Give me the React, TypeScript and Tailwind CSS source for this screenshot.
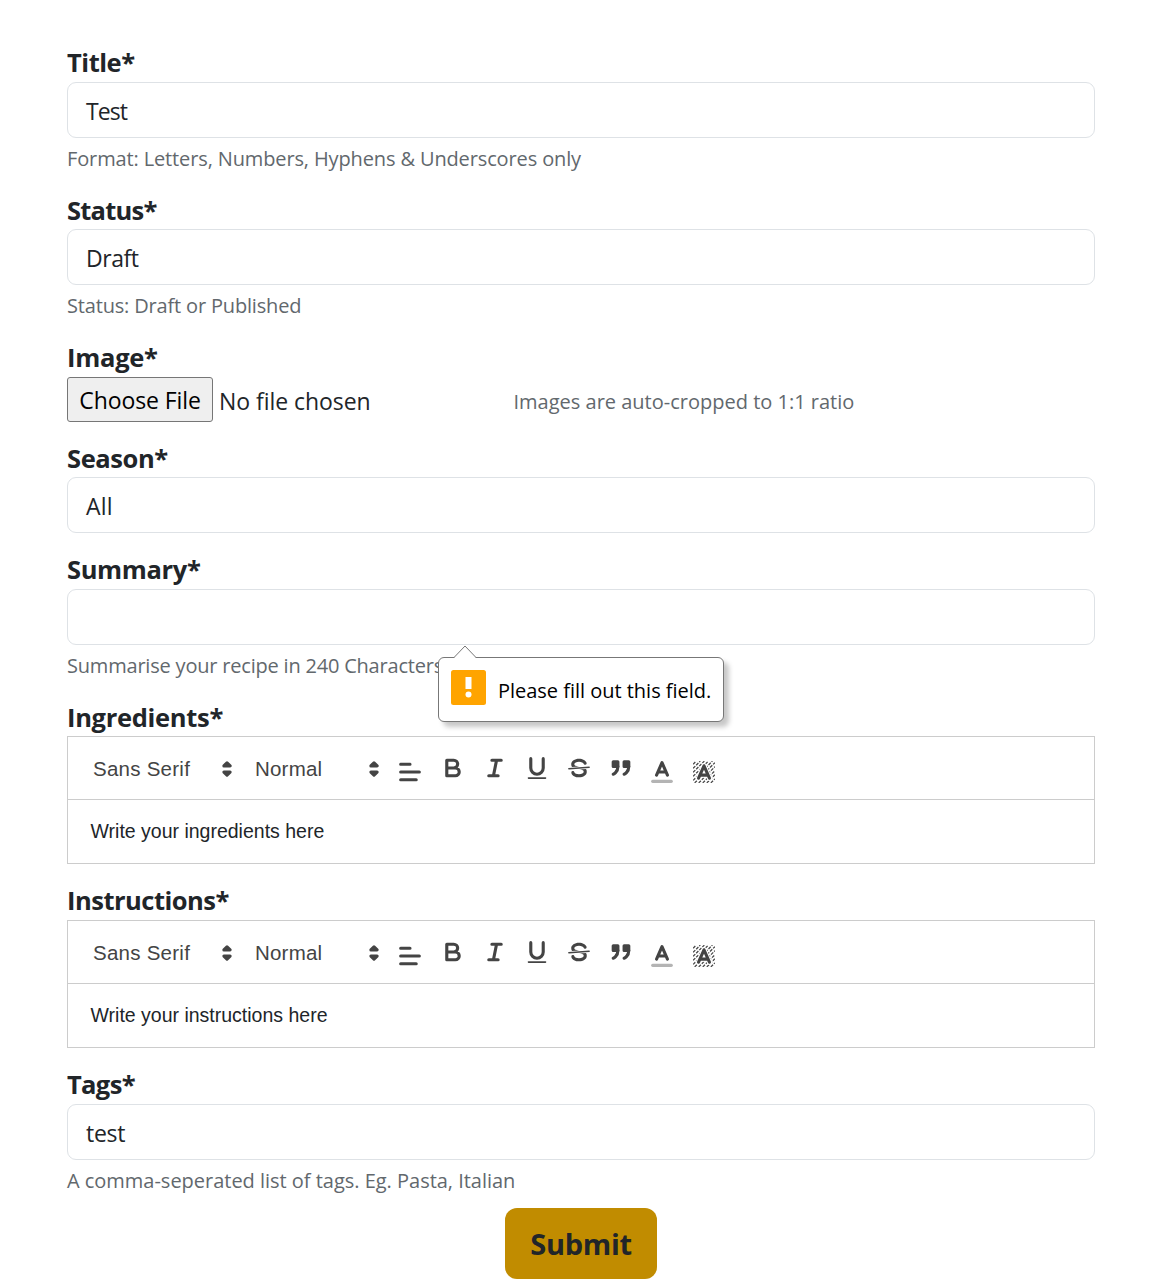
import type { ReactNode } from 'react';

const stroke = { fill: 'none', stroke: '#444', strokeWidth: 2, strokeLinecap: 'round', strokeLinejoin: 'round' } as const;

function Label({ children, track }: { children: ReactNode; track: string }) {
  return <label className={`block h-[39px] whitespace-nowrap text-[25.5px] leading-[39px] font-bold ${track}`}>{children}</label>;
}

function Box({ children, track = '' }: { children?: ReactNode; track?: string }) {
  return (
    <div className={`flex h-14 items-center rounded-[9px] border border-[#dee2e6] bg-white px-[18px] pt-px text-[23px] leading-[34px] ${track}`}>
      {children}
    </div>
  );
}

function Help({ children, track }: { children: ReactNode; track: string }) {
  return <p className={`w-max whitespace-nowrap text-[20px] leading-[30px] text-[#62686d] ${track}`}>{children}</p>;
}

function Icon({ children, low = false }: { children: ReactNode; low?: boolean }) {
  return (
    <svg viewBox="0 0 18 18" className={low ? 'size-7 shrink-0 mt-[21px]' : 'ml-[0.5px] mr-[-0.5px] mt-[17px] size-7 shrink-0'}>
      {children}
    </svg>
  );
}

function Picker({ text, className, track }: { text: string; className: string; track: string }) {
  return (
    <div className={`flex h-16 shrink-0 items-center justify-between ${className}`}>
      <span className={`text-[20.5px] leading-[30px] text-[#444] ${track}`}>{text}</span>
      <svg viewBox="0 0 18 18" className="size-7 shrink-0" {...stroke} fill="#444">
        <polygon points="7 11 9 13 11 11" />
        <polygon points="7 7 9 5 11 7" />
      </svg>
    </div>
  );
}

function Hatch() {
  return (
    <g stroke="#444" strokeWidth="0.8" fill="none">
      <svg x="2" y="2" width="14" height="14" viewBox="2 2 14 14">
        <path d="M2 4L4 2M2 6.6L6.6 2M2 9.2L9.2 2M2 11.8L11.8 2M2 14.4L14.4 2M3 16L16 3M5.6 16L16 5.6M8.2 16L16 8.2M10.8 16L16 10.8M13.4 16L16 13.4" strokeDasharray="2 0.8" />
      </svg>
      <path d="M5.5 13L9 5L12.5 13M6.4 11H11.6" stroke="white" strokeWidth="3.4" strokeLinejoin="round" strokeLinecap="round" />
    </g>
  );
}

function Editor({ text, track }: { text: string; track: string }) {
  return (
    <div className="h-32 border border-[#ccc] font-['Liberation_Sans',Arial,sans-serif]">
      <div className="flex h-[63px] items-start border-b border-[#ccc] pl-[25px]">
        <Picker text="Sans Serif" className="w-[148px]" track="tracking-[0.25px]" />
        <Picker text="Normal" className="ml-[14px] w-[133px]" track="tracking-[0.2px]" />
        <div className="ml-[8px] flex gap-[14px]">
          <Icon low>
            <path {...stroke} d="M3 9H15M3 14H13M3 4H9" />
          </Icon>
          <Icon>
            <path {...stroke} d="M5,4H9.5A2.5,2.5,0,0,1,12,6.5v0A2.5,2.5,0,0,1,9.5,9H5ZM5,9h5.5A2.5,2.5,0,0,1,13,11.5v0A2.5,2.5,0,0,1,10.5,14H5Z" />
          </Icon>
          <Icon>
            <path {...stroke} d="M7 4H13M5 14H11M8 14L10 4" />
          </Icon>
          <Icon>
            <path {...stroke} d="M5,3V9a4.012,4.012,0,0,0,4,4H9a4.012,4.012,0,0,0,4-4V3" />
            <rect fill="#444" height="1" width="12" rx="0.5" x="3" y="15" />
          </Icon>
          <Icon>
            <line x1="15.5" x2="2.5" y1="8.5" y2="9.5" {...stroke} strokeWidth="1" />
            <path fill="#444" d="M9.007,8C6.542,7.791,6,7.519,6,6.5,6,5.792,7.283,5,9,5c1.571,0,2.765.679,2.969,1.309a1,1,0,0,0,1.9-.617C13.356,4.106,11.354,3,9,3,6.2,3,4,4.538,4,6.5a3.2,3.2,0,0,0,.5,1.843Z" />
            <path fill="#444" d="M8.984,10C11.457,10.208,12,10.479,12,11.5c0,0.708-1.283,1.5-3,1.5-1.571,0-2.765-.679-2.969-1.309a1,1,0,1,0-1.9.617C4.644,13.894,6.646,15,9,15c2.8,0,5-1.538,5-3.5a3.2,3.2,0,0,0-.5-1.843Z" />
          </Icon>
          <Icon>
            <g {...stroke} fill="#444">
              <rect height="3" width="3" x="4" y="5" />
              <rect height="3" width="3" x="11" y="5" />
              <path d="M7,8c0,4.031-3,5-3,5" />
              <path d="M14,8c0,4.031-3,5-3,5" />
            </g>
          </Icon>
          <Icon low>
            <line x1="3" x2="15" y1="15" y2="15" {...stroke} opacity="0.4" />
            <path {...stroke} d="M5.5 11L9 3L12.5 11M11.63 9H6.38" />
          </Icon>
          <Icon low>
            <Hatch />
            <path {...stroke} d="M5.5 13L9 5L12.5 13M11.63 11H6.38" />
          </Icon>
        </div>
      </div>
      <p className={`pt-4 pl-[22.5px] text-[19.5px] leading-[30px] ${track}`}>{text}</p>
    </div>
  );
}

function Tooltip() {
  return (
    <div className="absolute top-[68px] left-[371px] z-10 flex h-[65px] w-[286px] items-center rounded-[6px] border border-[#777] bg-white pl-3 text-black shadow-[5px_5px_5px_rgba(0,0,0,0.22)]">
      <svg viewBox="0 0 26 14" className="absolute -top-[13px] left-[13px] h-[14px] w-[26px]">
        <path d="M1 14L13 1.5L25 14" fill="white" />
        <path d="M0.5 12.5H2L13 1L24 12.5H25.5" fill="none" stroke="#777" />
      </svg>
      <svg viewBox="0 0 35 35" className="-mt-[4px] size-[35px] shrink-0">
        <rect width="35" height="35" rx="2.5" fill="#ffa400" />
        <rect x="14.5" y="7" width="6" height="12" fill="white" />
        <circle cx="17.5" cy="24.5" r="3" fill="white" />
      </svg>
      <span className="mt-[2px] ml-3 whitespace-nowrap text-[20px] tracking-[-0.02px]">Please fill out this field.</span>
    </div>
  );
}

export default function App() {
  return (
    <form className="flex h-[1288px] w-[1158px] flex-col overflow-hidden bg-white pt-[43px] pr-[63px] pl-[67px] font-['Open_Sans','Noto_Sans',sans-serif] text-[#212529]">
      <section className="h-[147px] shrink-0">
        <Label track="tracking-[-0.45px]">Title*</Label>
        <Box track="tracking-[-0.9px]">Test</Box>
        <div className="pt-[6px]"><Help track="tracking-[-0.13px]">Format: Letters, Numbers, Hyphens &amp; Underscores only</Help></div>
      </section>
      <section className="h-[148px] shrink-0">
        <Label track="pt-px tracking-[-0.75px]">Status*</Label>
        <Box track="tracking-[-0.45px]">Draft</Box>
        <div className="pt-[6px]"><Help track="tracking-[-0.17px]">Status: Draft or Published</Help></div>
      </section>
      <section className="h-[100px] shrink-0">
        <Label track="tracking-[-0.25px]">Image*</Label>
        <div className="flex h-[45px] items-center">
          <button type="button" className="h-[45px] w-[146px] rounded-[3px] border border-[#767676] bg-[#efefef] text-[23px] leading-[34px] tracking-[-0.1px] whitespace-nowrap text-black">Choose File</button>
          <span className="w-[294px] pt-[3px] pl-[6px] text-[23px] leading-[34px] tracking-[-0.05px]">No file chosen</span>
          <div className="pl-[6.5px] pt-[4px]"><Help track="">Images are auto-cropped to 1:1 ratio</Help></div>
        </div>
      </section>
      <section className="h-[112px] shrink-0">
        <Label track="pt-px tracking-[-0.4px]">Season*</Label>
        <Box track="tracking-[0.2px]">All</Box>
      </section>
      <section className="relative h-[147px] shrink-0">
        <Label track="tracking-[-0.35px]">Summary*</Label>
        <Box />
        <div className="pt-[6px]"><Help track="tracking-[-0.2px]">Summarise your recipe in 240 Characters</Help></div>
        <div className="absolute top-[39px] left-0">
          <Tooltip />
        </div>
      </section>
      <section className="h-[184px] shrink-0">
        <Label track="pt-px tracking-[-0.3px]">Ingredients*</Label>
        <Editor text="Write your ingredients here" track="" />
      </section>
      <section className="h-[184px] shrink-0">
        <Label track="tracking-[-0.5px]">Instructions*</Label>
        <Editor text="Write your instructions here" track="" />
      </section>
      <section className="h-[143px] shrink-0">
        <Label track="tracking-[-0.65px]">Tags*</Label>
        <Box track="tracking-[-0.3px]">test</Box>
        <div className="pt-[6px]"><Help track="tracking-[-0.02px]">A comma-seperated list of tags. Eg. Pasta, Italian</Help></div>
      </section>
      <button type="button" className="h-[71px] w-[152px] shrink-0 self-center rounded-[12px] bg-[#c18c00] text-[29px] font-bold tracking-[-0.3px]">Submit</button>
    </form>
  );
}
